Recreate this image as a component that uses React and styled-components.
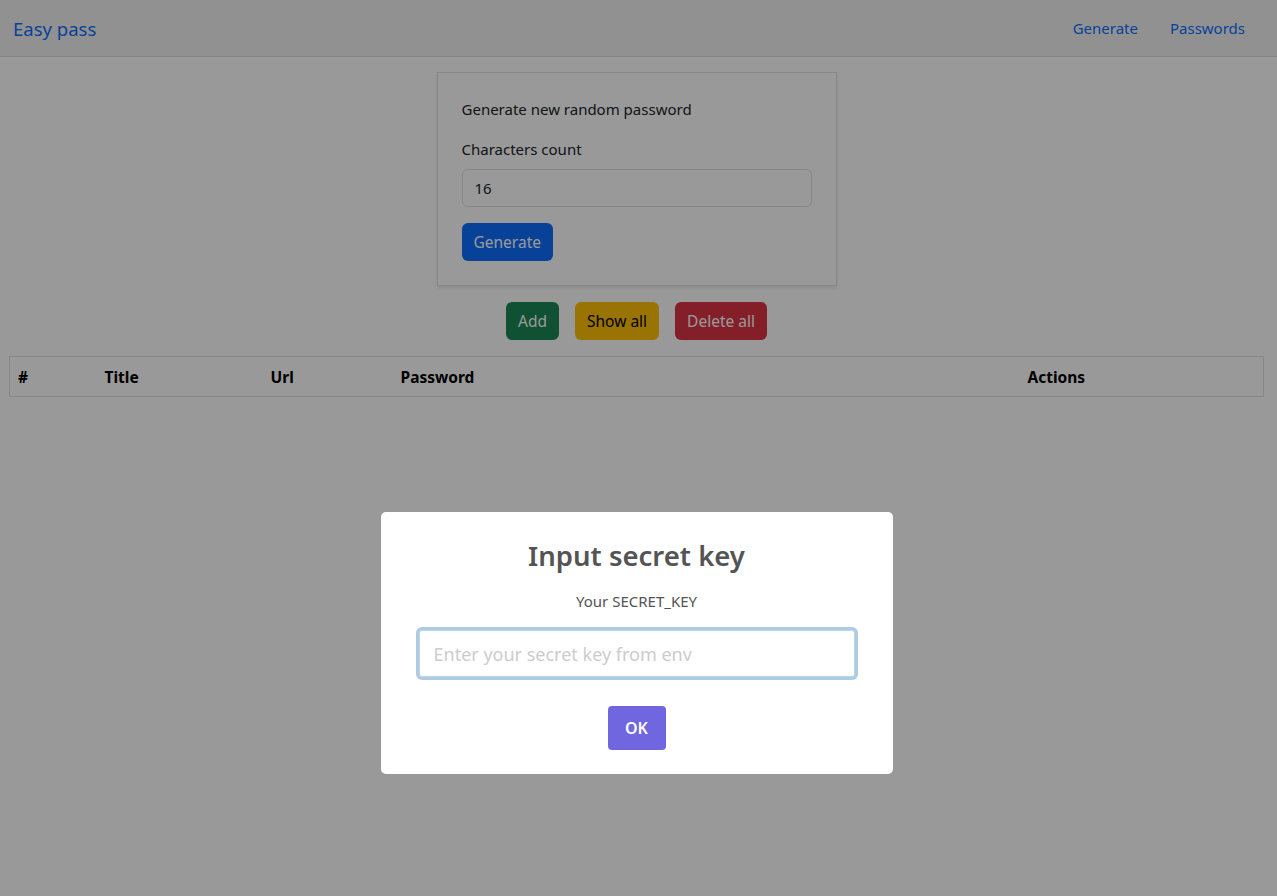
import React from "react";
import styled, { createGlobalStyle } from "styled-components";

const FONT = `"Segoe UI", "Noto Sans", "Liberation Sans", sans-serif`;

const GlobalStyle = createGlobalStyle`
  html, body {
    margin: 0;
    padding: 0;
    background: #fff;
    font-family: ${FONT};
    color: #212529;
  }
  * { box-sizing: border-box; }
`;

const Navbar = styled.nav`
  display: flex;
  align-items: center;
  justify-content: space-between;
  height: 57px;
  padding: 0 16px 0 13px;
  background: #f2f2f2;
  border-bottom: 1px solid #dedede;
`;

const Brand = styled.a`
  font-size: 18.5px;
  color: #0d6efd;
  text-decoration: none;
`;

const NavLinks = styled.div`
  display: flex;
`;

const NavLink = styled.a`
  font-size: 15px;
  color: #0d6efd;
  text-decoration: none;
  padding: 8px 16px;
`;

const Main = styled.main`
  display: flex;
  flex-direction: column;
  align-items: center;
  padding: 15px 13px 0 9px;
`;

const Card = styled.div`
  width: 400px;
  padding: 24px;
  border: 1px solid #dee2e6;
  box-shadow: 0 2px 4px rgba(0, 0, 0, 0.08);
  font-size: 15px;
`;

const CardText = styled.p`
  margin: 0 0 16px;
  line-height: 24px;
`;

const Label = styled.label`
  display: block;
  margin-bottom: 8px;
  line-height: 24px;
`;

const TextInput = styled.input`
  display: block;
  width: 100%;
  height: 38px;
  padding: 6px 12px;
  font-family: ${FONT};
  font-size: 15px;
  color: #212529;
  border: 1px solid #dee2e6;
  border-radius: 6px;
  margin-bottom: 16px;
  outline: none;
`;

const palette = {
  primary: { bg: "#0d6efd", fg: "#fff" },
  success: { bg: "#198754", fg: "#fff" },
  warning: { bg: "#ffc107", fg: "#000" },
  danger: { bg: "#dc3545", fg: "#fff" },
};

const Button = styled.button`
  height: 38px;
  padding: 0 12px;
  font-family: ${FONT};
  font-size: 15.5px;
  border: none;
  border-radius: 6px;
  background: ${(p) => palette[p.$variant].bg};
  color: ${(p) => palette[p.$variant].fg};
`;

const ButtonRow = styled.div`
  display: flex;
  gap: 16px;
  margin-top: 16px;
`;

const Table = styled.table`
  width: 100%;
  margin-top: 16px;
  border-collapse: collapse;
  border: 1px solid #dee2e6;
  table-layout: fixed;
`;

const Th = styled.th`
  text-align: left;
  font-weight: 700;
  font-size: 15.5px;
  height: 40px;
  padding: 0 8px;
  color: #000;
  width: ${(p) => (p.$w ? `${p.$w}px` : "auto")};
`;

const Overlay = styled.div`
  position: fixed;
  inset: 0;
  background: rgba(0, 0, 0, 0.4);
  display: flex;
  align-items: center;
  justify-content: center;
  padding: 390px 4px 0 0;
`;

const Modal = styled.div`
  width: 512px;
  background: #fff;
  border-radius: 5px;
  display: flex;
  flex-direction: column;
  align-items: center;
  padding: 23px 0 24px;
  font-family: ${FONT};
`;

const ModalTitle = styled.h2`
  margin: 0;
  font-size: 27.5px;
  font-weight: 600;
  color: #545454;
  line-height: 42px;
`;

const ModalText = styled.div`
  margin-top: 13px;
  font-size: 15px;
  color: #545454;
  line-height: 22px;
`;

const SecretInput = styled.input`
  width: 436px;
  height: 47px;
  margin-top: 18px;
  padding: 0 14px;
  font-family: ${FONT};
  font-size: 18px;
  color: #545454;
  border: 1px solid #b4dbed;
  border-radius: 3px;
  box-shadow: 0 0 0 3px rgba(100, 150, 200, 0.5);
  outline: none;
  &::placeholder { color: #ccc; }
`;

const OkButton = styled.button`
  margin-top: 29px;
  width: 58px;
  height: 44px;
  border: none;
  border-radius: 4px;
  background: #7066e0;
  color: #fff;
  font-family: ${FONT};
  font-size: 16px;
  font-weight: 600;
`;

export default function App() {
  return (
    <>
      <GlobalStyle />
      <Navbar>
        <Brand href="#">Easy pass</Brand>
        <NavLinks>
          <NavLink href="#">Generate</NavLink>
          <NavLink href="#">Passwords</NavLink>
        </NavLinks>
      </Navbar>
      <Main>
        <Card>
          <CardText>Generate new random password</CardText>
          <Label>Characters count</Label>
          <TextInput defaultValue="16" />
          <Button $variant="primary">Generate</Button>
        </Card>
        <ButtonRow>
          <Button $variant="success">Add</Button>
          <Button $variant="warning">Show all</Button>
          <Button $variant="danger">Delete all</Button>
        </ButtonRow>
        <Table>
          <thead>
            <tr>
              <Th $w={87}>#</Th>
              <Th $w={166}>Title</Th>
              <Th $w={130}>Url</Th>
              <Th $w={627}>Password</Th>
              <Th>Actions</Th>
            </tr>
          </thead>
          <tbody />
        </Table>
      </Main>
      <Overlay>
        <Modal>
          <ModalTitle>Input secret key</ModalTitle>
          <ModalText>Your SECRET_KEY</ModalText>
          <SecretInput placeholder="Enter your secret key from env" autoFocus />
          <OkButton>OK</OkButton>
        </Modal>
      </Overlay>
    </>
  );
}
